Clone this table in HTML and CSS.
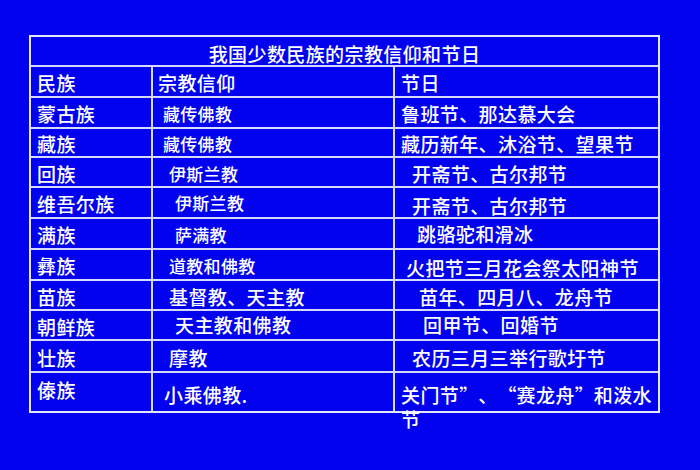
FILE: index.html
```html
<!DOCTYPE html>
<html lang="zh-CN">
<head>
<meta charset="utf-8">
<title>我国少数民族的宗教信仰和节日</title>
<link rel="stylesheet" href="styles.css">
</head>
<body>
<main class="sheet">
  <div class="tbl">
    <div class="cell title">我国少数民族的宗教信仰和节日</div>

    <div class="cell c1">民族</div>
    <div class="cell c2 in-5">宗教信仰</div>
    <div class="cell c3 in-6">节日</div>

    <div class="cell c1">蒙古族</div>
    <div class="cell c2 in-10 sm">藏传佛教</div>
    <div class="cell c3 in-6">鲁班节、那达慕大会</div>

    <div class="cell c1">藏族</div>
    <div class="cell c2 in-10 sm">藏传佛教</div>
    <div class="cell c3 in-6">藏历新年、沐浴节、望果节</div>

    <div class="cell c1">回族</div>
    <div class="cell c2 in-16 sm">伊斯兰教</div>
    <div class="cell c3 in-17">开斋节、古尔邦节</div>

    <div class="cell c1">维吾尔族</div>
    <div class="cell c2 in-22 sm up">伊斯兰教</div>
    <div class="cell c3 in-17 low">开斋节、古尔邦节</div>

    <div class="cell c1">满族</div>
    <div class="cell c2 in-22 sm">萨满教</div>
    <div class="cell c3 in-22 up">跳骆驼和滑冰</div>

    <div class="cell c1">彝族</div>
    <div class="cell c2 in-16 sm">道教和佛教</div>
    <div class="cell c3 in-11 low">火把节三月花会祭太阳神节</div>

    <div class="cell c1">苗族</div>
    <div class="cell c2 in-16">基督教、天主教</div>
    <div class="cell c3 in-24">苗年、四月八、龙舟节</div>

    <div class="cell c1">朝鲜族</div>
    <div class="cell c2 in-22 up">天主教和佛教</div>
    <div class="cell c3 in-28 up">回甲节、回婚节</div>

    <div class="cell c1">壮族</div>
    <div class="cell c2 in-16">摩教</div>
    <div class="cell c3 in-17">农历三月三举行歌圩节</div>

    <div class="cell c1 last top">傣族</div>
    <div class="cell c2 last in-11 mid">小乘佛教.</div>
    <div class="cell c3 last in-6 wrap">关门节<span class="q q-close">”</span>、<span class="q q-open">“</span>赛龙舟<span class="q q-close">”</span>和泼水<br>节</div>
  </div>
</main>
</body>
</html>
```

FILE: styles.css
```css
* {
  box-sizing: border-box;
}

html,
body {
  margin: 0;
  padding: 0;
  background: #0202ee;
}

body {
  width: 700px;
  height: 470px;
  overflow: hidden;
  font-family: "Noto Sans CJK SC", "Noto Sans", sans-serif;
  color: #ffffff;
}

.sheet {
  padding: 35px 0 0 29px;
}

.tbl {
  width: 631px;
  border: 2px solid #e6e6ff;
  display: grid;
  grid-template-columns: 122px 242px 263px;
  grid-template-rows: 30px 31px 31px 29px 30px 31px 31px 31px 30px 30px 32px 38px;
}

.cell {
  display: flex;
  align-items: center;
  border-bottom: 2px solid #d8d8fb;
  font-size: 19px;
  letter-spacing: 0.4px;
  line-height: 1;
  white-space: nowrap;
  padding-top: 2px;
  font-weight: 500;
}

.title {
  grid-column: 1 / 4;
  justify-content: center;
  padding-top: 4px;
}

.c1 {
  border-right: 2px solid #d8d8fb;
  padding-left: 6px;
}

.c2 {
  border-right: 2px solid #d8d8fb;
}

.last {
  border-bottom: none;
}

.sm {
  font-size: 17px;
  letter-spacing: 0.3px;
}

.up {
  padding-top: 0;
  padding-bottom: 1px;
}

.low {
  padding-top: 6px;
}

.top {
  align-items: flex-start;
  padding-top: 7px;
}

.mid {
  align-items: flex-start;
  padding-top: 12px;
}

.wrap {
  display: block;
  padding-top: 10px;
  line-height: 24px;
  white-space: normal;
}

.q {
  display: inline-block;
  width: 19px;
  letter-spacing: 0;
}

.q-close {
  text-align: left;
}

.q-open {
  text-align: right;
}

.in-5 { padding-left: 5px; }
.in-6 { padding-left: 6px; }
.in-10 { padding-left: 10px; }
.in-11 { padding-left: 11px; }
.in-16 { padding-left: 16px; }
.in-17 { padding-left: 17px; }
.in-22 { padding-left: 22px; }
.in-24 { padding-left: 24px; }
.in-28 { padding-left: 28px; }
```
